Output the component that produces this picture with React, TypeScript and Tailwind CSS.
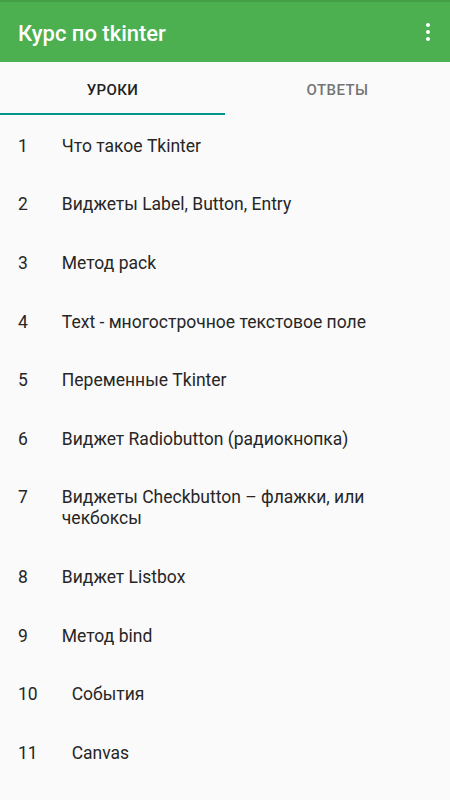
import { useState } from "react";

const lessons = [
  "Что такое Tkinter",
  "Виджеты Label, Button, Entry",
  "Метод pack",
  "Text - многострочное текстовое поле",
  "Переменные Tkinter",
  "Виджет Radiobutton (радиокнопка)",
  "Виджеты Checkbutton – флажки, или чекбоксы",
  "Виджет Listbox",
  "Метод bind",
  "События",
  "Canvas",
];

export default function App() {
  const [tab, setTab] = useState(0);

  return (
    <div className="flex h-[800px] w-[450px] flex-col overflow-hidden bg-[#fafafa] font-['Roboto',sans-serif]">
      {/* app bar */}
      <div className="h-[2px] bg-[#43a047]" />
      <header className="flex h-[60px] items-center justify-between bg-[#4caf50] pl-[18px] pr-[16px]">
        <h1 className="pt-[2px] text-[22px] font-medium text-white">Курс по tkinter</h1>
        <button className="flex flex-col items-center gap-[3px] p-1">
          <span className="h-[4px] w-[4px] rounded-full bg-white" />
          <span className="h-[4px] w-[4px] rounded-full bg-white" />
          <span className="h-[4px] w-[4px] rounded-full bg-white" />
        </button>
      </header>

      {/* tabs */}
      <nav className="flex h-[53px] shrink-0">
        {["УРОКИ", "ОТВЕТЫ"].map((label, i) => (
          <button
            key={label}
            onClick={() => setTab(i)}
            className={`flex flex-1 flex-col ${tab === i ? "text-[#212121]" : "text-[#757575]"}`}
          >
            <span className="flex flex-1 items-center justify-center pt-[6px] text-[15px] font-medium tracking-[0.4px]">
              {label}
            </span>
            <span className={`h-[2px] w-full ${tab === i ? "bg-[#00968a]" : "bg-transparent"}`} />
          </button>
        ))}
      </nav>

      {/* list */}
      <ul className="pt-[2px]">
        {lessons.map((title, i) => (
          <li key={i} className="flex py-[18.8px] pl-[18px] pr-[60px] text-[17.5px] leading-[21px] text-[#262626]">
            <span className="shrink-0">{i + 1}</span>
            <span className="ml-[34px]">{title}</span>
          </li>
        ))}
      </ul>
    </div>
  );
}
